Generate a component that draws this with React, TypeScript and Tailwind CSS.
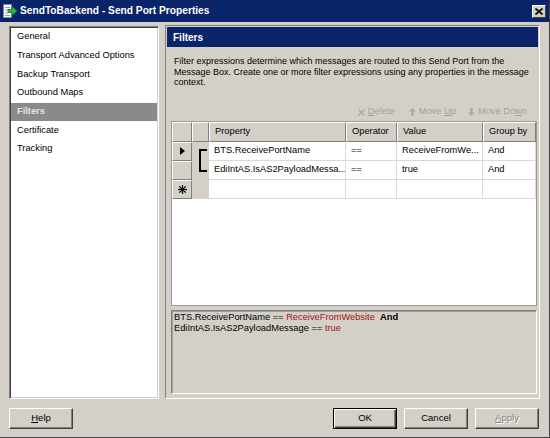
import React from "react"

const pages = [
  "General",
  "Transport Advanced Options",
  "Backup Transport",
  "Outbound Maps",
  "Filters",
  "Certificate",
  "Tracking",
]

const rows = [
  { marker: "current", property: "BTS.ReceivePortName", op: "==", value: "ReceiveFromWe...", group: "And" },
  { marker: "", property: "EdiIntAS.IsAS2PayloadMessa...", op: "==", value: "true", group: "And" },
  { marker: "new", property: "", op: "", value: "", group: "" },
]

const raised =
  "bg-[#d4d0c8] border-t border-l border-t-white border-l-white border-r border-b border-r-[#808080] border-b-[#808080]"

function WinButton({ children, primary, disabled }: { children: React.ReactNode; primary?: boolean; disabled?: boolean }) {
  return (
    <button
      className={
        "w-[64px] h-[21px] flex items-center justify-center bg-[#d4d0c8] text-[9.5px] " +
        (primary
          ? "border border-black shadow-[inset_1px_1px_0_#fff,inset_-1px_-1px_0_#404040,inset_-2px_-2px_0_#808080]"
          : "border border-t-white border-l-white border-r-[#404040] border-b-[#404040] shadow-[inset_-1px_-1px_0_#808080]") +
        (disabled ? " text-[#808080] [text-shadow:1px_1px_0_#fff]" : " text-black")
      }
    >
      {children}
    </button>
  )
}

function TitleIcon() {
  return (
    <svg width="16" height="16" viewBox="0 0 16 16">
      <rect x="1.5" y="1.5" width="8" height="13" fill="#fff" stroke="#7a8aa0" />
      <line x1="3" y1="4.5" x2="8" y2="4.5" stroke="#8fa0b8" />
      <line x1="3" y1="7" x2="6" y2="7" stroke="#8fa0b8" />
      <line x1="3" y1="10" x2="6" y2="10" stroke="#8fa0b8" />
      <line x1="3" y1="12.5" x2="8" y2="12.5" stroke="#8fa0b8" />
      <path d="M6 6.5 H10 V3.5 L15 8 L10 12.5 V9.5 H6 Z" fill="#2fb84a" stroke="#117a2a" strokeWidth="0.8" />
    </svg>
  )
}

function Grid() {
  return (
    <div className="mt-[3px] ml-[4px] mr-[1px] h-[185px] bg-white border border-[#999999] flex flex-col">
      <div className="grid grid-cols-[20px_17px_137px_51px_86px_1fr]">
        <div className={raised + " h-[20px]"} />
        <div className={raised + " h-[20px]"} />
        {["Property", "Operator", "Value", "Group by"].map((h) => (
          <div key={h} className={raised + " h-[20px] pl-[5px] flex items-center"}>
            {h}
          </div>
        ))}
        {rows.map((r, i) => (
          <React.Fragment key={i}>
            <div className={raised + " h-[19px] flex items-center justify-center"}>
              {r.marker === "current" && (
                <svg width="5" height="8" viewBox="0 0 5 8">
                  <path d="M0 0 L5 4 L0 8 Z" fill="#000" />
                </svg>
              )}
              {r.marker === "new" && (
                <svg width="9" height="9" viewBox="0 0 9 9" stroke="#000" strokeWidth="1.2">
                  <line x1="4.5" y1="0" x2="4.5" y2="9" />
                  <line x1="0" y1="4.5" x2="9" y2="4.5" />
                  <line x1="1.3" y1="1.3" x2="7.7" y2="7.7" />
                  <line x1="7.7" y1="1.3" x2="1.3" y2="7.7" />
                </svg>
              )}
            </div>
            <div className="h-[19px] bg-[#d4d0c8] flex flex-col pl-[7px]">
              {i === 0 && <div className="mt-[7px] h-[12px] w-[8px] border-l-2 border-t-2 border-black" />}
              {i === 1 && <div className="h-[11px] w-[8px] border-l-2 border-b-2 border-black" />}
            </div>
            {[r.property, r.op, r.value, r.group].map((c, j) => (
              <div
                key={j}
                className="h-[19px] pl-[5px] flex items-center border-r border-b border-[#dcdad5] whitespace-nowrap overflow-hidden"
              >
                {c}
              </div>
            ))}
          </React.Fragment>
        ))}
      </div>
    </div>
  )
}

export default function App() {
  return (
    <div className="w-[550px] h-[438px] bg-[#d4d0c8] flex flex-col font-['Liberation_Sans',Arial,sans-serif] text-[9.3px] text-black border-r border-b border-r-[#404040] border-b-[#404040] overflow-hidden">
      {/* Title bar */}
      <div className="h-[22px] bg-[#0a246a] flex items-center pl-[2px] pr-[3px]">
        <TitleIcon />
        <span className="ml-[2px] text-white font-bold text-[10.2px]">SendToBackend - Send Port Properties</span>
        <div className="ml-auto w-[14px] h-[13px] bg-[#d4d0c8] border border-t-white border-l-white border-r-[#404040] border-b-[#404040] flex items-center justify-center">
          <svg width="8" height="7" viewBox="0 0 8 7" stroke="#000" strokeWidth="1.6">
            <line x1="0.5" y1="0.5" x2="7.5" y2="6.5" />
            <line x1="7.5" y1="0.5" x2="0.5" y2="6.5" />
          </svg>
        </div>
      </div>

      <div className="flex-1 flex flex-col pl-[9px] pr-[9px] pt-[3px]">
        <div className="h-[374px] flex gap-[6px]">
          {/* Page list */}
          <div className="w-[150px] mt-[1px] bg-white border border-t-[#808080] border-l-[#808080] border-r-white border-b-white shadow-[inset_1px_1px_0_#404040,inset_-1px_-1px_0_#d4d0c8] pt-[1px] px-[1px]">
            {pages.map((p) => (
              <div
                key={p}
                className={
                  "h-[18.67px] flex items-center pl-[6px] " +
                  (p === "Filters" ? "bg-[#8a8a8a] text-[#e4e4e4] font-bold" : "")
                }
              >
                {p}
              </div>
            ))}
          </div>

          {/* Property page */}
          <div className="flex-1 flex flex-col border border-t-[#808080] border-l-[#808080] border-r-white border-b-white p-[1px]">
            <div className="h-[20px] bg-[#0a246a] text-white font-bold text-[10px] pl-[6px] flex items-center">Filters</div>
            <div className="pt-[9px] pl-[7px] text-[9px] leading-[10.5px]">
              Filter expressions determine which messages are routed to this Send Port from the
              <br />
              Message Box. Create one or more filter expressions using any properties in the message
              <br />
              context.
            </div>

            <div className="mt-[19px] h-[11px] flex justify-end items-center pr-[11px] text-[#a0a0a0]">
              <svg width="7" height="7" viewBox="0 0 7 7" stroke="#a8a8a8" strokeWidth="1.2">
                <line x1="0.5" y1="0.5" x2="6.5" y2="6.5" />
                <line x1="6.5" y1="0.5" x2="0.5" y2="6.5" />
              </svg>
              <span className="ml-[3px]">
                <span className="underline">D</span>elete
              </span>
              <svg className="ml-[14px]" width="7" height="8" viewBox="0 0 7 8">
                <path d="M3.5 0 L7 3.5 H4.6 V8 H2.4 V3.5 H0 Z" fill="#a8a8a8" />
              </svg>
              <span className="ml-[3px]">
                Move <span className="underline">U</span>p
              </span>
              <svg className="ml-[12px]" width="7" height="8" viewBox="0 0 7 8">
                <path d="M3.5 8 L7 4.5 H4.6 V0 H2.4 V4.5 H0 Z" fill="#a8a8a8" />
              </svg>
              <span className="ml-[3px]">
                Move Do<span className="underline">w</span>n
              </span>
            </div>

            <Grid />

            <div className="mt-[4px] ml-[4px] mr-[1px] h-[84px] border border-t-[#808080] border-l-[#808080] border-r-white border-b-white shadow-[inset_1px_1px_0_#a0a0a0] pl-[2px] pt-[1px] leading-[11.5px]">
              <div>
                BTS.ReceivePortName == <span className="text-[#a31515]">ReceiveFromWebsite</span>
                <span className="font-bold">&nbsp;&nbsp;And</span>
              </div>
              <div>
                EdiIntAS.IsAS2PayloadMessage == <span className="text-[#a31515]">true</span>
              </div>
            </div>
          </div>
        </div>

        {/* Buttons */}
        <div className="mt-[9px] flex items-center">
          <WinButton>
            <span className="underline">H</span>elp
          </WinButton>
          <div className="ml-auto flex gap-[7px] pr-[1px]">
            <WinButton primary>OK</WinButton>
            <WinButton>Cancel</WinButton>
            <WinButton disabled>
              <span className="underline">A</span>pply
            </WinButton>
          </div>
        </div>
      </div>
    </div>
  )
}
